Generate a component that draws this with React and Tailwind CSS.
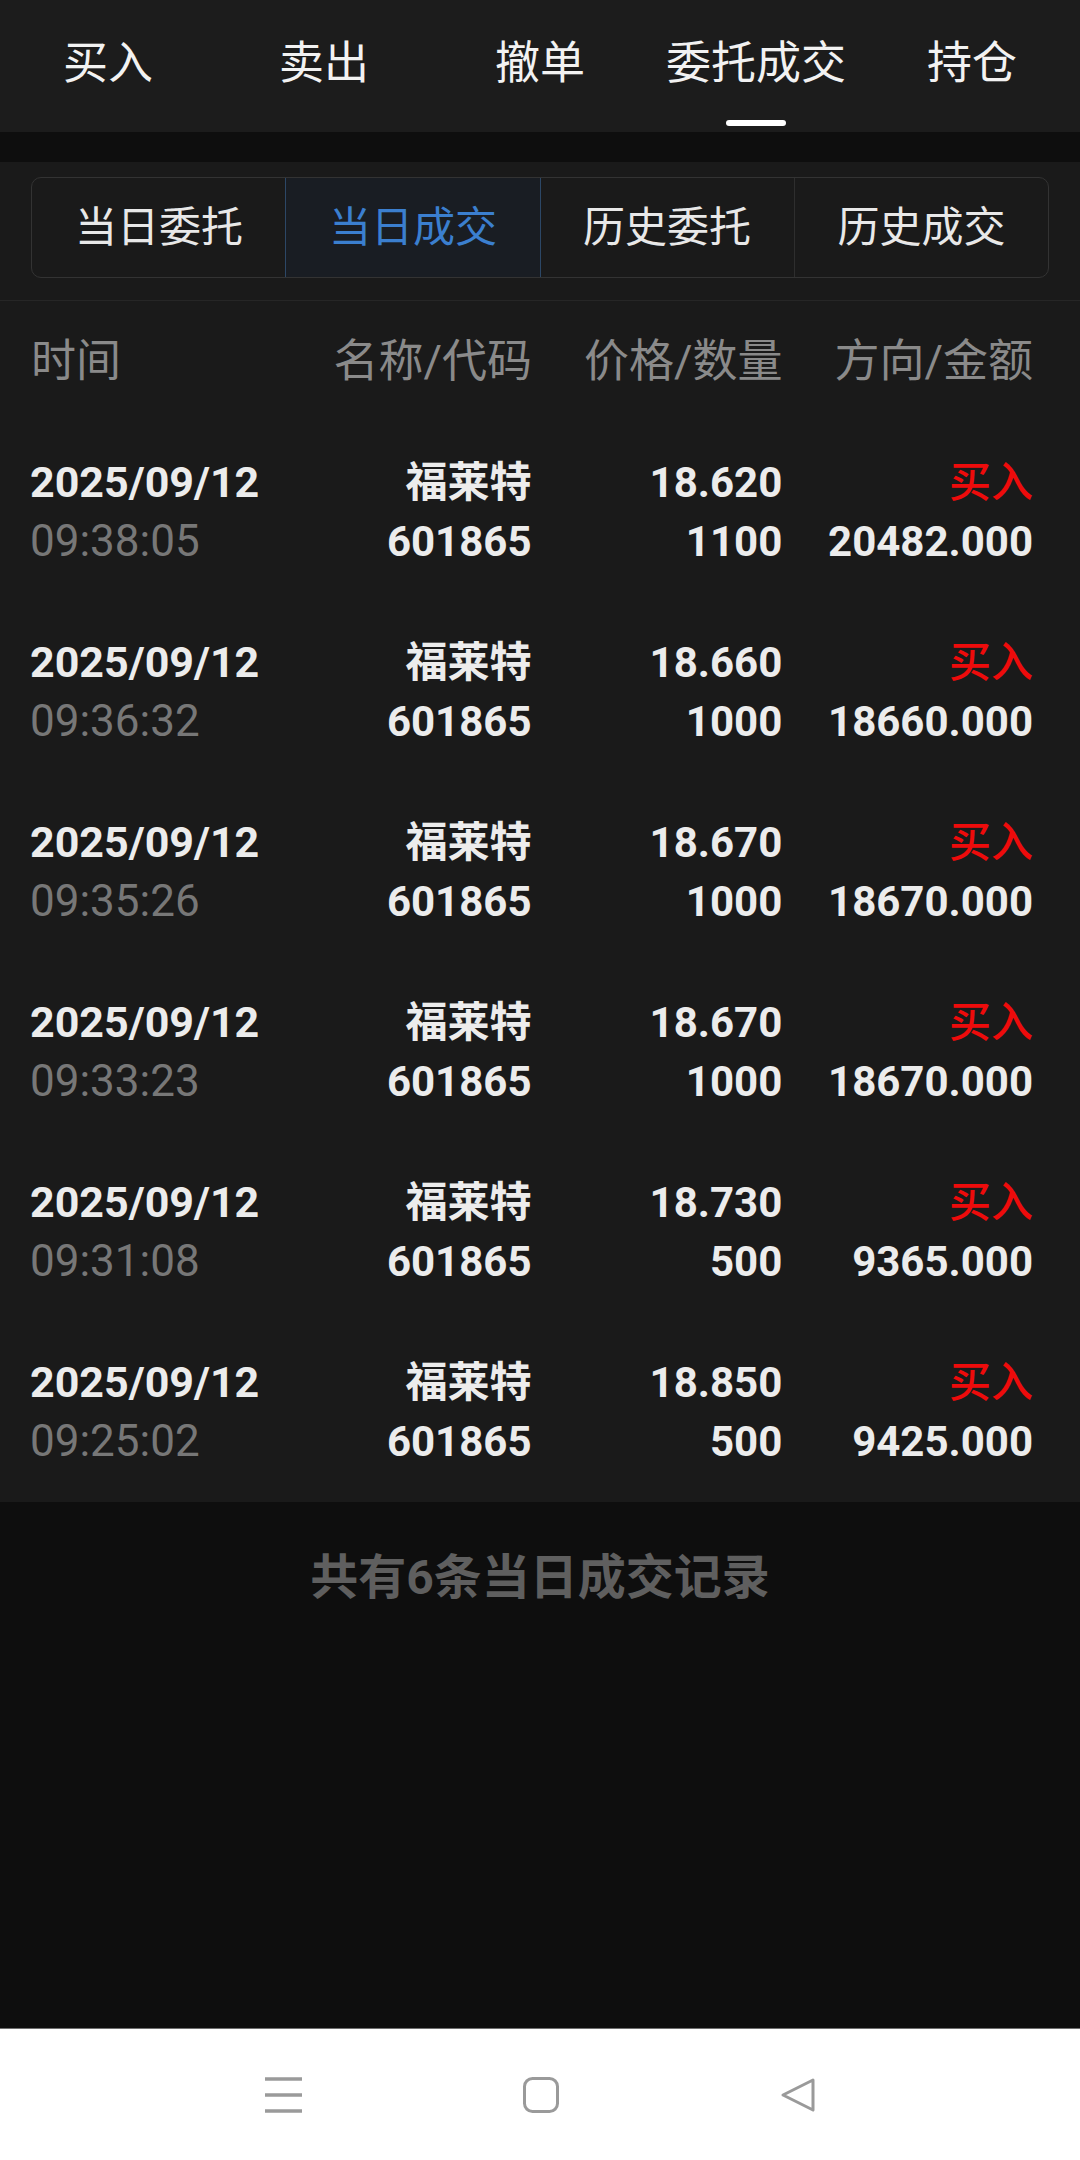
import React from 'react';

const tabs = ['买入', '卖出', '撤单', '委托成交', '持仓'];
const segments = ['当日委托', '当日成交', '历史委托', '历史成交'];

const trades = [
  { time: '09:38:05', price: '18.620', qty: '1100', amount: '20482.000' },
  { time: '09:36:32', price: '18.660', qty: '1000', amount: '18660.000' },
  { time: '09:35:26', price: '18.670', qty: '1000', amount: '18670.000' },
  { time: '09:33:23', price: '18.670', qty: '1000', amount: '18670.000' },
  { time: '09:31:08', price: '18.730', qty: '500', amount: '9365.000' },
  { time: '09:25:02', price: '18.850', qty: '500', amount: '9425.000' },
];

const font = { fontFamily: 'Roboto, "Noto Sans CJK SC", sans-serif' };

function App() {
  return (
    <div className="w-[1080px] h-[2160px] flex flex-col bg-[#0e0e0e]" style={font}>
      {/* 顶部标签 */}
      <div className="h-[132px] grid grid-cols-5 bg-[#1c1c1c]">
        {tabs.map((t, i) => (
          <div key={t} className="relative flex items-center justify-center pb-[6px]">
            <span className="text-[45px] leading-none text-[#f2f2f2]">{t}</span>
            {i === 3 && (
              <div className="absolute bottom-[6px] left-1/2 -translate-x-1/2 w-[60px] h-[6px] rounded-full bg-white" />
            )}
          </div>
        ))}
      </div>

      <div className="h-[30px] bg-[#0e0e0e]" />

      {/* 内容 */}
      <div className="bg-[#1a1a1a]">
        <div className="pt-[15px] pb-[22px] px-[31px]">
          <div className="h-[101px] grid grid-cols-4 border border-[#333333] rounded-[10px] overflow-hidden">
            {segments.map((s, i) => (
              <div
                key={s}
                className={`flex items-center justify-center text-[42px] ${
                  i === 1
                    ? 'bg-[#191d23] text-[#3b7fcf] outline outline-1 outline-[#2c4766]'
                    : 'text-[#e8e8e8]'
                } ${i === 3 ? 'border-l border-[#2e2e2e]' : ''}`}
              >
                {s}
              </div>
            ))}
          </div>
        </div>
        <div className="h-[1px] bg-[#262626]" />

        {/* 表头 */}
        <div className="h-[121px] grid grid-cols-4 items-center pl-[31px] pr-[47px] text-[45px] text-[#8a8a8a]">
          <div>时间</div>
          <div className="text-right">名称/代码</div>
          <div className="text-right">价格/数量</div>
          <div className="text-right">方向/金额</div>
        </div>

        {trades.map((r) => (
          <div key={r.time} className="grid grid-cols-4 pl-[30px] pr-[47px] py-[31px] text-[42px] leading-[59px]">
            <div>
              <div className="font-bold text-[43px] text-[#ececec]">2025/09/12</div>
              <div className="text-[44px] text-[#777777]">{r.time}</div>
            </div>
            <div className="text-right font-bold text-[#ececec]">
              <div>福莱特</div>
              <div>601865</div>
            </div>
            <div className="text-right font-bold text-[#ececec]">
              <div>{r.price}</div>
              <div>{r.qty}</div>
            </div>
            <div className="text-right">
              <div className="font-medium text-[#ee0b0b]">买入</div>
              <div className="font-bold text-[#ececec]">{r.amount}</div>
            </div>
          </div>
        ))}
      </div>

      <div className="pt-[48px] text-center text-[48px] leading-[56px] font-bold text-[#5f5f5f]">
        共有6条当日成交记录
      </div>

      <div className="flex-1" />

      {/* 系统导航栏 */}
      <div className="h-[132px] bg-white border-t border-[#6f6f6f] flex items-center justify-center gap-[221px]">
        <svg width="37" height="36" viewBox="0 0 37 36" fill="none" stroke="#9a9a9a" strokeWidth="3.5">
          <line x1="0" y1="2" x2="37" y2="2" />
          <line x1="0" y1="18" x2="37" y2="18" />
          <line x1="0" y1="34" x2="37" y2="34" />
        </svg>
        <svg width="36" height="36" viewBox="0 0 36 36" fill="none" stroke="#9a9a9a" strokeWidth="3">
          <rect x="1.5" y="1.5" width="33" height="33" rx="8" />
        </svg>
        <svg width="36" height="36" viewBox="0 0 36 36" fill="none" stroke="#9a9a9a" strokeWidth="3" strokeLinejoin="round">
          <path d="M33 3 L3 18 L33 33 Z" />
        </svg>
      </div>
    </div>
  );
}

export default App;
